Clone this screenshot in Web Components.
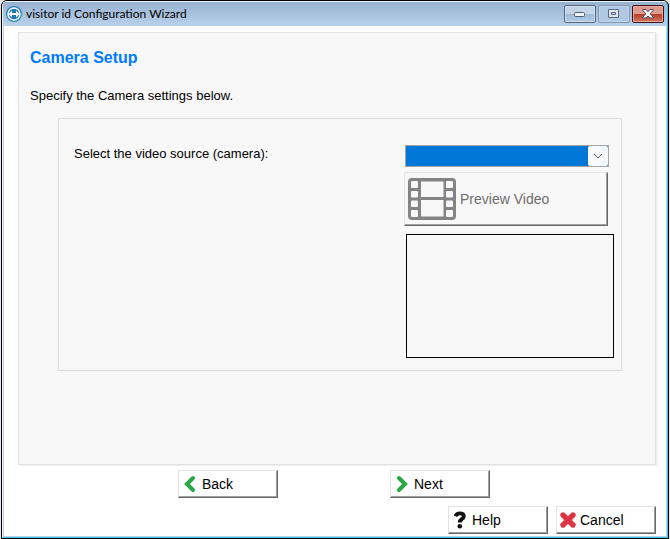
<!DOCTYPE html>
<html lang="en">
<head>
<meta charset="utf-8">
<title>visitor id Configuration Wizard</title>
<style>
html, body {
  height: 100%;
  margin: 0;
}

body {
  background-color: #e6e6e6;
  font-family: 'Liberation Sans', Arial, sans-serif;
  font-size: 13px;
  line-height: 16px;
  color: #000;
}
</style>
</head>
<body>
<wizard-window heading="visitor id Configuration Wizard">
  <wizard-page heading="Camera Setup" text="Specify the Camera settings below.">
    <camera-settings></camera-settings>
  </wizard-page>
  <wizard-button slot="steps" icon="back">Back</wizard-button>
  <wizard-button slot="steps" icon="next">Next</wizard-button>
  <wizard-button slot="actions" icon="help">Help</wizard-button>
  <wizard-button slot="actions" icon="cancel">Cancel</wizard-button>
</wizard-window>

<script>
const icons = {
  back: `<svg width="12" height="18" viewBox="0 0 12 18" fill="none">
    <path d="M9 3L3 9L9 15" stroke="#28a745" stroke-width="4" stroke-linecap="round"/>
  </svg>`,
  next: `<svg width="12" height="18" viewBox="0 0 12 18" fill="none">
    <path d="M3 3L9 9L3 15" stroke="#28a745" stroke-width="4" stroke-linecap="round"/>
  </svg>`,
  help: `<svg width="12" height="18" viewBox="0 0 12 18" fill="none">
    <path d="M1.4 5.2C2.4 3.2 3.8 2.4 5.8 2.4C8.4 2.4 9.8 3.8 9.8 5.4C9.8 8.2 5.8 7.8 5.8 11.4" stroke="#111" stroke-width="3.9"/>
    <circle cx="5.8" cy="15.3" r="2.3" fill="#111"/>
  </svg>`,
  cancel: `<svg width="18" height="18" viewBox="0 0 18 18" fill="none">
    <path d="M4 4L14 14M14 4L4 14" stroke="#dc3545" stroke-width="5.4" stroke-linecap="round"/>
  </svg>`,
  film: `<svg width="48" height="42" viewBox="0 0 48 42">
    <path fill="#848484" fill-rule="evenodd" d="M4 0H44Q48 0 48 4V38Q48 42 44 42H4Q0 42 0 38V4Q0 0 4 0Z
      M13 3.5V19H35.5V3.5Z M13 22V38.5H35.5V22Z
      M4 3H9Q10 3 10 4V9Q10 10 9 10H4Q3 10 3 9V4Q3 3 4 3Z
      M4 13H9Q10 13 10 14V18.5Q10 19.5 9 19.5H4Q3 19.5 3 18.5V14Q3 13 4 13Z
      M4 22.5H9Q10 22.5 10 23.5V28Q10 29 9 29H4Q3 29 3 28V23.5Q3 22.5 4 22.5Z
      M4 32H9Q10 32 10 33V38Q10 39 9 39H4Q3 39 3 38V33Q3 32 4 32Z
      M39 3H44Q45 3 45 4V9Q45 10 44 10H39Q38 10 38 9V4Q38 3 39 3Z
      M39 13H44Q45 13 45 14V18.5Q45 19.5 44 19.5H39Q38 19.5 38 18.5V14Q38 13 39 13Z
      M39 22.5H44Q45 22.5 45 23.5V28Q45 29 44 29H39Q38 29 38 28V23.5Q38 22.5 39 22.5Z
      M39 32H44Q45 32 45 33V38Q45 39 44 39H39Q38 39 38 38V33Q38 32 39 32Z"/>
  </svg>`
}

const titleBarCss = `
:host {
  height: 24px;
  padding-left: 3px;

  display: flex;
  align-items: center;
  gap: 4px;

  background: linear-gradient(#98b2d1, #b9d1ea);
  box-sizing: border-box;
}

.title {
  flex-grow: 1;
  font-family: Lato, sans-serif;
  font-size: 12px;
  white-space: nowrap;
}

.controls {
  height: 100%;
  padding-right: 3px;

  display: flex;
  align-items: flex-start;
  gap: 2px;
}

button {
  width: 32px;
  height: 18px;
  margin: 3px 0 0;
  padding: 0;

  display: flex;
  align-items: center;
  justify-content: center;

  border: 1px solid #56687f;
  border-radius: 2px;
  background: linear-gradient(#c3d4e8 50%, #9eb8d5 50%, #b4cce6);
  box-shadow: inset 0 0 0 1px #d0dfef;
}

.maximize {
  border-color: #8298b5;
  background: #b0c8e2;
  box-shadow: inset 0 0 0 1px #c0d3e8;
}

.close {
  border-color: #45101c;
  background: linear-gradient(#dd9b8e 50%, #b73a25 50%, #d07a60);
  box-shadow: inset 0 0 0 1px #e2aaa0;
}
`

class TitleBar extends HTMLElement {
  connectedCallback() {
    this.attachShadow({ mode: 'open' })
    this.render()
  }

  render() {
    this.shadowRoot.innerHTML = `
      <style>${titleBarCss}</style>
      <svg width="16" height="16" viewBox="0 0 16 16" fill="none">
        <circle cx="8" cy="8" r="8" fill="#2383bc"/>
        <circle cx="8" cy="8" r="6" fill="#1b79b5" stroke="#fff" stroke-width="1.5"/>
        <path d="M2.6 8L6 4.6V7.1H10V4.6L13.4 8L10 11.4V8.9H6V11.4Z" fill="#fff"/>
      </svg>
      <span class="title"><slot></slot></span>
      <div class="controls">
        <button type="button" aria-label="Minimize">
          <svg width="12" height="6" viewBox="0 0 12 6"><rect x=".5" y="1.5" width="10" height="4" rx="1" fill="#f2f2f2" stroke="#505c70"/></svg>
        </button>
        <button class="maximize" type="button" aria-label="Maximize">
          <svg width="12" height="10" viewBox="0 0 12 10"><path d="M.5 .5H10.5V8.5H.5ZM3.5 3.5V5.5H7.5V3.5Z" fill="#dce3eb" fill-rule="evenodd" stroke="#5e6a80"/></svg>
        </button>
        <button class="close" type="button" aria-label="Close">
          <svg width="12" height="10" viewBox="0 0 12 10"><path d="M.8 .5H4L6 2.7L8 .5H11.2V1.5L8.2 4.8L11.2 8V9H8L6 7L4 9H.8V8L3.8 4.8L.8 1.5Z" fill="#f4f4f4" stroke="#51485a"/></svg>
        </button>
      </div>
    `
  }
}

customElements.define('title-bar', TitleBar)

const windowCss = `
:host {
  min-height: 100vh;
  padding: 0 1px;

  display: flex;
  box-sizing: border-box;
}

.shell {
  flex-grow: 1;

  display: flex;

  border: 1px solid #000;
  border-radius: 6px 6px 0 0;
  background-color: #000;
}

.frame {
  flex-grow: 1;

  display: flex;
  flex-direction: column;

  border: 1px solid;
  border-color: #eef4fa #3fc4ea #3fc4ea #eef4fa;
  border-radius: 5px 5px 0 0;
  background-color: #b9d1ea;
  overflow: hidden;
}

.client {
  margin: 0 1px 1px;
  padding: 6px 10px 2px 14px;

  flex-grow: 1;
  display: flex;
  flex-direction: column;

  background-color: #fff;
}

::slotted(wizard-page) {
  flex-grow: 1;
}

.steps {
  padding: 5px 6px 8px 0;

  display: flex;
  justify-content: center;
  gap: 112px;
}

.actions {
  display: flex;
  justify-content: flex-end;
  gap: 8px;
}
`

// heading - title bar text, slots "steps" and "actions" take the buttons
class WizardWindow extends HTMLElement {
  connectedCallback() {
    this.attachShadow({ mode: 'open' })
    this.render()
  }

  render() {
    this.shadowRoot.innerHTML = `
      <style>${windowCss}</style>
      <div class="shell">
        <div class="frame">
          <title-bar>${this.getAttribute('heading')}</title-bar>
          <div class="client">
            <slot></slot>
            <div class="steps"><slot name="steps"></slot></div>
            <div class="actions"><slot name="actions"></slot></div>
          </div>
        </div>
      </div>
    `
  }
}

customElements.define('wizard-window', WizardWindow)

const pageCss = `
:host {
  padding: 16px 33px 16px 11px;

  display: block;

  border: 1px solid #e2e2e2;
  background-color: #f8f8f8;
  box-shadow: 2px 1px 0 #f0f0f0;
}

h1 {
  margin: 0;

  font-size: 16px;
  line-height: 18px;
  color: #007bff;
}

p {
  margin: 21px 0 14px;
}

.content {
  margin-left: 28px;
}
`

class WizardPage extends HTMLElement {
  connectedCallback() {
    this.attachShadow({ mode: 'open' })
    this.render()
  }

  render() {
    this.shadowRoot.innerHTML = `
      <style>${pageCss}</style>
      <h1>${this.getAttribute('heading')}</h1>
      <p>${this.getAttribute('text')}</p>
      <div class="content"><slot></slot></div>
    `
  }
}

customElements.define('wizard-page', WizardPage)

const settingsCss = `
:host {
  padding: 26px 7px 12px 15px;

  display: flex;
  align-items: flex-start;
  justify-content: space-between;

  border: 1px solid #dadada;
}

label {
  padding-top: 1px;
}

.source {
  width: 210px;

  display: flex;
  flex-direction: column;
}

select {
  width: 204px;
  height: 22px;
  margin: 0 0 5px 1px;

  appearance: none;
  border: 1px solid #a6a6a6;
  border-radius: 0;
  background-color: #0078d7;
  outline: none;
}

.combo {
  display: grid;
}

.combo select,
.combo svg {
  grid-area: 1 / 1;
}

.combo svg {
  margin: 1px 0 0 184px;
  pointer-events: none;
}

.preview {
  height: 124px;
  margin: 8px 0 0 2px;

  border: 1px solid #000;
  box-sizing: border-box;
}
`

class CameraSettings extends HTMLElement {
  connectedCallback() {
    this.attachShadow({ mode: 'open' })
    this.render()
  }

  render() {
    this.shadowRoot.innerHTML = `
      <style>${settingsCss}</style>
      <label for="camera">Select the video source (camera):</label>
      <div class="source">
        <div class="combo">
          <select id="camera"></select>
          <svg width="20" height="20" viewBox="0 0 20 20" fill="none">
            <rect width="20" height="20" rx="2" fill="#f7fafd"/>
            <path d="M6 8L10 12L14 8" stroke="#555"/>
          </svg>
        </div>
        <wizard-button icon="film" large disabled>Preview Video</wizard-button>
        <div class="preview"></div>
      </div>
    `
  }
}

customElements.define('camera-settings', CameraSettings)

const buttonCss = `
:host {
  width: 100px;
  height: 28px;

  display: block;
}

:host([large]) {
  width: 204px;
  height: 54px;
}

button {
  width: 100%;
  height: 100%;
  padding: 0 5px;

  display: flex;
  align-items: center;
  gap: 6px;

  border: 1px solid;
  border-color: #e3e3e3 #696969 #696969 #e3e3e3;
  background-color: #fff;
  box-shadow: inset -1px -1px 0 #a0a0a0;
  box-sizing: border-box;

  font: inherit;
  font-size: 14px;
  color: inherit;
}

:host([large]) button {
  padding: 0 3px;
  gap: 4px;

  background-color: #f8f8f8;
  color: #6d6d6d;
}

:host([icon='cancel']) button {
  padding-left: 2px;
  gap: 3px;
}

svg {
  flex-shrink: 0;
}
`

class WizardButton extends HTMLElement {
  connectedCallback() {
    this.attachShadow({ mode: 'open' })
    this.render()
  }

  render() {
    this.shadowRoot.innerHTML = `
      <style>${buttonCss}</style>
      <button type="button" ${this.hasAttribute('disabled') ? 'disabled' : ''}>
        ${icons[this.getAttribute('icon')]}
        <span><slot></slot></span>
      </button>
    `
  }
}

customElements.define('wizard-button', WizardButton)
</script>
</body>
</html>
